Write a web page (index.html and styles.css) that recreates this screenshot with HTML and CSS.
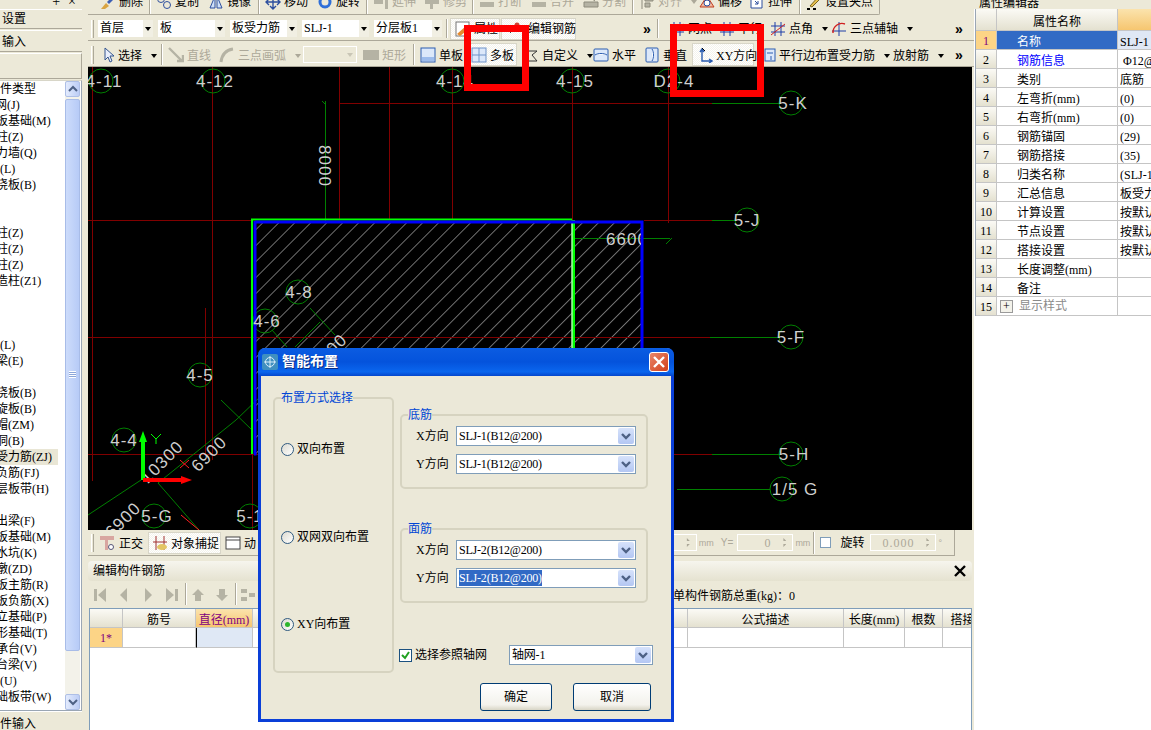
FILE: index.html
```html
<!DOCTYPE html>
<html lang="zh-CN">
<head>
<meta charset="utf-8">
<title>智能布置</title>
<link rel="stylesheet" href="styles.css">
</head>
<body>
<svg class="defs" aria-hidden="true">
  <symbol id="chev" viewBox="0 0 16 16"><path d="M4 6l4 4 4-4" fill="none" stroke="#4d6185" stroke-width="2.4"/></symbol>
  <symbol id="navfirst" viewBox="0 0 16 16"><path d="M2 2h3v12H2zM14 1v14L6 8z" fill="#b5b3a4"/></symbol>
  <symbol id="navprev" viewBox="0 0 16 16"><path d="M11 1v14L4 8z" fill="#b5b3a4"/></symbol>
  <symbol id="navnext" viewBox="0 0 16 16"><path d="M5 1v14l7-7z" fill="#b5b3a4"/></symbol>
  <symbol id="navlast" viewBox="0 0 16 16"><path d="M2 1v14l8-7zM11 2h3v12h-3z" fill="#b5b3a4"/></symbol>
  <symbol id="up" viewBox="0 0 16 16"><path d="M8 2l6 6h-3v6H5V8H2z" fill="#b5b3a4"/></symbol>
  <symbol id="down" viewBox="0 0 16 16"><path d="M5 2h6v6h3l-6 6-6-6h3z" fill="#b5b3a4"/></symbol>
  <symbol id="plate" viewBox="0 0 16 16"><rect x="1" y="1" width="14" height="14" fill="#dce8fa" stroke="#2a5cb0"/><rect x="2" y="10" width="12" height="4" fill="#9dbcec"/></symbol>
  <symbol id="plates" viewBox="0 0 16 16"><rect x="1" y="1" width="14" height="14" fill="#dce8fa" stroke="#6f93c8"/><path d="M8 1v14M1 8h14" stroke="#6f93c8"/></symbol>
  <symbol id="gridico" viewBox="0 0 16 16"><path d="M5 1v14M11 1v14M1 5h14M1 11h14" stroke="#1f3fa8" fill="none"/><path d="M1 14L15 3" stroke="#d02020"/></symbol>
</svg>

<div class="app">
  <aside class="left">
    <div class="left-top"><span>+</span><span>×</span></div>
    <div class="left-btn">设置</div>
    <div class="left-btn tall">输入</div>
    <div class="left-box"></div>
    <div class="tree-wrap">
      <ul class="tree">
        <li class="i12">构件类型</li><li class="i17">轴网(J)</li><li>筏板基础(M)</li><li>框柱(Z)</li><li>剪力墙(Q)</li><li class="i12">梁(L)</li><li>现浇板(B)</li>
        <li></li><li></li><li>框柱(Z)</li><li>暗柱(Z)</li><li>端柱(Z)</li><li>构造柱(Z1)</li><li></li><li></li><li></li>
        <li class="i12">梁(L)</li><li>圈梁(E)</li><li></li><li>现浇板(B)</li><li>螺旋板(B)</li><li>柱帽(ZM)</li><li>板洞(B)</li>
        <li class="sel">板受力筋(ZJ)</li><li>板负筋(FJ)</li><li>楼层板带(H)</li><li></li><li>挑出梁(F)</li><li>筏板基础(M)</li><li>集水坑(K)</li><li>柱墩(ZD)</li><li>筏板主筋(R)</li><li>筏板负筋(X)</li><li>独立基础(P)</li><li>条形基础(T)</li><li>桩承台(V)</li><li>承台梁(V)</li><li class="i12">桩(U)</li><li>基础板带(W)</li>
      </ul>
      <div class="vscroll">
        <div class="sbtn"><svg width="14" height="14"><path d="M3 9l4-4 4 4" fill="none" stroke="#4d6185" stroke-width="2"/></svg></div>
        <div class="thumb"><i></i></div>
        <div class="track"></div>
        <div class="sbtn"><svg width="14" height="14"><path d="M3 5l4 4 4-4" fill="none" stroke="#4d6185" stroke-width="2"/></svg></div>
      </div>
    </div>
    <div class="left-btn foot">件输入</div>
  </aside>

  <main class="center">
    <div class="tb tb1">
      <span class="t w49"><svg class="ic" viewBox="0 0 16 16"><path d="M1 15l5-6 3 3-4 3z" fill="#d9a441"/><path d="M7 8l6-6 2 2-6 6z" fill="#3c5fb4"/></svg>删除</span><b class="sep"></b>
      <span class="t w52"><svg class="ic" viewBox="0 0 16 16"><circle cx="5" cy="5" r="3.5" fill="none" stroke="#2d4f9e"/><circle cx="11" cy="11" r="3.5" fill="none" stroke="#2d4f9e"/></svg>复制</span>
      <span class="t w50"><svg class="ic" viewBox="0 0 16 16"><path d="M7 2L2 14h5zM9 2l5 12H9z" fill="#cfe0f7" stroke="#2d4f9e"/></svg>镜像</span><b class="sep"></b>
      <span class="t w52"><svg class="ic" viewBox="0 0 16 16"><path d="M8 1v14M1 8h14M5 4l3-3 3 3M5 12l3 3 3-3M4 5L1 8l3 3M12 5l3 3-3 3" fill="none" stroke="#2d4f9e" stroke-width="1.4"/></svg>移动</span>
      <span class="t w49"><svg class="ic" viewBox="0 0 16 16"><circle cx="8" cy="8" r="5" fill="none" stroke="#2f6fd8" stroke-width="3"/></svg>旋转</span><b class="sep"></b>
      <span class="t off w51"><svg class="ic" viewBox="0 0 16 16"><path d="M1 6h9v4H1zM12 1h3v14h-3z" fill="#b5b3a4"/></svg>延伸</span>
      <span class="t off w48"><svg class="ic" viewBox="0 0 16 16"><path d="M1 6h14v4H1zM6 1h3v14H6z" fill="#b5b3a4"/></svg>修剪</span><b class="sep"></b>
      <span class="t off w52"><svg class="ic" viewBox="0 0 16 16"><path d="M1 8h14v5H1zM6 1h4v5H6z" fill="#b5b3a4"/></svg>打断</span>
      <span class="t off w52"><svg class="ic" viewBox="0 0 16 16"><path d="M1 8h14v5H1zM6 1h4v5H6z" fill="#b5b3a4"/></svg>合并</span>
      <span class="t off w49"><svg class="ic" viewBox="0 0 16 16"><path d="M1 8h14v5H1zM4 1l8 6" fill="#b5b3a4" stroke="#8d8b7c"/></svg>分割</span><b class="sep"></b>
      <span class="t off w60"><svg class="ic" viewBox="0 0 16 16"><path d="M3 1v14M6 3h8v4H6zM6 9h5v4H6z" fill="#b5b3a4" stroke="#8d8b7c"/></svg>对齐<em class="dd"></em></span>
      <span class="t w50"><svg class="ic" viewBox="0 0 16 16"><path d="M8 2l7 11H1z" fill="#f3b8a0" stroke="#c04020"/><circle cx="8" cy="9" r="3" fill="#fff" stroke="#2d4f9e"/></svg>偏移</span>
      <span class="t w50"><svg class="ic" viewBox="0 0 16 16"><path d="M2 2h11v12H2z" fill="#fff" stroke="#2d4f9e"/><path d="M6 7l3 3M9 7v3H6" fill="none" stroke="#2d4f9e"/></svg>拉伸</span><b class="sep"></b>
      <span class="t"><svg class="ic" viewBox="0 0 16 16"><path d="M4 12L13 2l2 2-9 9z" fill="#e6c04d" stroke="#7a6420"/><path d="M1 15h3M7 15h3" stroke="#000" stroke-width="2"/></svg>设置夹点</span>
    </div>

    <div class="tb tb2">
      <i class="grip"></i>
      <div class="combo w55">首层<em class="dd"></em></div>
      <div class="combo w67">板<em class="dd"></em></div>
      <div class="combo w67">板受力筋<em class="dd"></em></div>
      <div class="combo w67">SLJ-1<em class="dd"></em></div>
      <div class="combo w68">分层板1<em class="dd"></em></div>
      <b class="sep s-a"></b>
      <span class="t pressed w50 attr"><svg class="ic" viewBox="0 0 16 16"><rect x="1" y="1" width="13" height="14" fill="#fff" stroke="#777"/><path d="M2 13l9-8 3 3-9 7z" fill="#e68a2e"/></svg>属性</span>
      <span class="t pressed w75 edit"><svg class="ic wide" viewBox="0 0 22 16"><path d="M2 9h18M5 6L2 9l3 3M17 6l3 3-3 3" fill="none" stroke="#444"/><circle cx="11" cy="4" r="2.5" fill="#d04030"/></svg>编辑钢筋</span>
      <span class="more m1">»</span>
      <b class="sep s-b"></b>
      <span class="t w50"><svg class="ic" viewBox="0 0 16 16"><use href="#gridico"/></svg>网点</span>
      <span class="t w51"><svg class="ic" viewBox="0 0 16 16"><path d="M5 1v14M11 1v14M1 5h14M1 11h14" stroke="#1f3fa8" fill="none"/></svg>平行</span>
      <span class="t w61"><svg class="ic" viewBox="0 0 16 16"><use href="#gridico"/></svg>点角<em class="dd"></em></span>
      <span class="t"><svg class="ic" viewBox="0 0 16 16"><path d="M8 1v14M1 10h14" stroke="#1f3fa8"/><path d="M2 12A9 9 0 0 1 14 3" fill="none" stroke="#d02020" stroke-width="1.4"/></svg>三点辅轴<em class="dd"></em></span>
      <span class="more m2">»</span>
    </div>

    <div class="tb tb3">
      <i class="grip"></i>
      <span class="t w58 sel-tool"><svg class="ic small" viewBox="0 0 12 16"><path d="M2 1v12l3-3 2 5 2-1-2-5h4z" fill="#e8eefb" stroke="#34558f"/></svg>选择<em class="dd"></em></span><b class="sep"></b>
      <span class="t off w51"><svg class="ic" viewBox="0 0 16 16"><path d="M1 1l13 13M9 14h6V8" fill="none" stroke="#b5b3a4" stroke-width="2.4"/></svg>直线</span>
      <span class="t off w84"><svg class="ic" viewBox="0 0 16 16"><path d="M2 15C3 7 7 3 14 2" fill="none" stroke="#b5b3a4" stroke-width="3"/></svg>三点画弧<em class="dd"></em></span>
      <div class="combo off-combo"><em class="dd"></em></div>
      <span class="t off w50"><svg class="ic" viewBox="0 0 16 16"><rect y="3" width="16" height="10" fill="#b5b3a4"/></svg>矩形</span><b class="sep"></b>
      <span class="t w49"><svg class="ic" viewBox="0 0 16 16"><use href="#plate"/></svg>单板</span>
      <span class="t pressed w48 multi"><svg class="ic" viewBox="0 0 16 16"><use href="#plates"/></svg>多板</span>
      <span class="t w70 custom"><svg class="ic" viewBox="0 0 16 16"><path d="M2 12V4h12l-5 4 5 6H2" fill="none" stroke="#333"/></svg>自定义<em class="dd"></em></span>
      <span class="t w51"><svg class="ic" viewBox="0 0 16 16"><rect x="1" y="2" width="14" height="12" rx="1" fill="#dce8fa" stroke="#2a5cb0"/><path d="M2 8c3-2 9-2 12 0" fill="#fff" stroke="#2a5cb0"/></svg>水平</span>
      <span class="t w48"><svg class="ic" viewBox="0 0 16 16"><rect x="2" y="1" width="12" height="14" rx="1" fill="#dce8fa" stroke="#2a5cb0"/><path d="M8 2c2 3 2 9 0 12" fill="#fff" stroke="#2a5cb0"/></svg>垂直</span>
      <span class="t pressed w62 xy"><svg class="ic" viewBox="0 0 16 16"><path d="M5 3v11h10M3 5l2-3 2 3M12 12l3 2-3 2" fill="none" stroke="#2a5cb0" stroke-width="1.4"/><path d="M5 1l3 3" stroke="#000"/></svg>XY方向</span>
      <span class="t w129 para"><svg class="ic small" viewBox="0 0 12 16"><rect x="1" y="2" width="10" height="12" fill="#dce8fa" stroke="#2a5cb0"/><path d="M3 6h6M7 9v4" stroke="#2a5cb0"/></svg>平行边布置受力筋<em class="dd"></em></span>
      <span class="t">放射筋<em class="dd"></em></span>
      <span class="more m2">»</span>
    </div>

    <div class="canvas">
      <svg class="cad" viewBox="88 67 884 463" width="884" height="463">
        <defs>
          <pattern id="hatch" width="11.3" height="11.3" patternUnits="userSpaceOnUse" patternTransform="rotate(45 255 223)">
            <line x1="0" y1="0" x2="0" y2="11.3" stroke="#dedede" stroke-width="1"/>
          </pattern>
          <clipPath id="clip6600"><rect x="590" y="225" width="51" height="30"/></clipPath>
        </defs>
        <rect x="254" y="221" width="388" height="233" fill="url(#hatch)"/>
        <g stroke="#800000" fill="none">
          <path d="M92.500 67V481M212.500 67V460M205.500 308V455M339.500 67V220M389.500 67V220M452.500 67V220M572.500 67V220M668.500 67V223"/>
          <path d="M339 103.500H712M88 220.500H252M644 220.500H712M88 337.500H710M88 454.500H258M674 454.500H712M252.500 454V530"/>
        </g>
        <g stroke="#008000" fill="none">
          <path d="M712 103.500H780M712 220.500H735M710 337.500H780M712 454.500H780M677 489.500H770"/>
          <path d="M325.500 101V221M322 101l4 4M572 238.500H670M666 244l6-6"/>
          <path d="M88 515L141 480M158 483L236 420M236 420L262 395M221 400L252 430M158 483L199 530M142 455L145 480"/>
          <path d="M272 330L287 347M310 308L335 335M320 322L295 347"/>
          <circle cx="101" cy="81" r="12"/><circle cx="213" cy="81" r="12"/><circle cx="452" cy="81" r="12"/><circle cx="572" cy="81" r="12"/><circle cx="668" cy="81" r="12"/>
          <circle cx="791" cy="103" r="12"/><circle cx="747" cy="220" r="12"/><circle cx="791" cy="337" r="12"/><circle cx="791" cy="454" r="12"/><circle cx="782" cy="489" r="12"/>
          <circle cx="298" cy="292" r="12"/><circle cx="265" cy="321" r="12"/><circle cx="200" cy="375" r="12"/><circle cx="124" cy="440" r="12"/><circle cx="154" cy="516" r="12"/><circle cx="250" cy="516" r="12"/>
        </g>
        <path d="M180 460l9 8M189 460l-9 8M181 515L199 530" stroke="#ff2020" fill="none"/>
        <path d="M252 220V454" stroke="#00ff00" stroke-width="2"/>
        <path d="M251 219.500H572M572.500 220V454M574 220V454" stroke="#00ff00" stroke-width="2" fill="none"/>
        <path d="M572 221V454" stroke="#fff" stroke-width="1"/>
        <path d="M255 222H642V348M255 221V454H254" stroke="#0000ff" stroke-width="3" fill="none"/>
        <g class="lbl">
          <text x="104" y="87">4-11</text><text x="215" y="87">4-12</text><text x="455" y="87">4-14</text><text x="575" y="87">4-15</text><text x="674" y="87">D2-4</text>
          <text x="793" y="109">5-K</text><text x="747" y="226">5-J</text><text x="791" y="343">5-F</text><text x="794" y="460">5-H</text><text x="795" y="495">1/5 G</text>
          <text x="299" y="298">4-8</text><text x="267" y="327">4-6</text><text x="200" y="381">4-5</text><text x="124" y="446">4-4</text><text x="157" y="522">5-G</text><text x="250" y="522">5-1</text>
          <g clip-path="url(#clip6600)"><text x="627" y="245">6600</text></g>
          <text transform="translate(319 166) rotate(90)">8000</text>
          <text transform="translate(166 466) rotate(-45)">10300</text>
          <text transform="translate(213 458) rotate(-45)">6900</text>
          <text transform="translate(127 524) rotate(-45)">6900</text>
          <text transform="translate(337 352) rotate(-45)">900</text>
        </g>
        <path d="M143 480V440" stroke="#00ff00" stroke-width="4"/><path d="M143 431l-4 11h8z" fill="#00ff00"/>
        <path d="M151 434l5 5 5-5M156 439v5" stroke="#00ff00" fill="none"/>
        <path d="M143 480H182" stroke="#ff0000" stroke-width="4"/><path d="M192 480l-11-4v8z" fill="#ff0000"/>
      </svg>
    </div>

    <div class="status">
      <i class="grip"></i>
      <span class="st w49"><svg class="ic" viewBox="0 0 16 16"><path d="M1 1h14v4H9v10H6V5H1z" fill="#d8a6a0"/><circle cx="12" cy="12" r="2.500" fill="#fff" stroke="#557"/></svg>正交</span>
      <span class="st pressed w73"><svg class="ic" viewBox="0 0 16 16"><path d="M4 1v14M12 1v14" stroke="#a03030"/><path d="M1 7h14" stroke="#a03030"/><ellipse cx="10" cy="12" rx="5" ry="3" fill="#e3c565"/></svg>对象捕捉</span>
      <span class="st dyn"><svg class="ic" viewBox="0 0 16 16"><rect x="1" y="2" width="14" height="12" fill="#fff" stroke="#444"/><path d="M1 5h14" stroke="#444"/></svg>动</span>
      <span class="coords">
        <span class="spin">0<i class="arrows"></i></span><small>mm</small><small class="y">Y=</small><span class="spin">0<i class="arrows"></i></span><small>mm</small><b class="sep"></b>
        <i class="cb"></i><span class="rot">旋转</span><span class="spin wide">0.000<i class="arrows"></i></span><small>°</small>
      </span>
    </div>

    <div class="phead"><span>编辑构件钢筋</span><svg class="close-x" width="14" height="14" viewBox="0 0 14 14"><path d="M2 2l10 10M12 2L2 12" stroke="#000" stroke-width="2.400"/></svg></div>
    <div class="ptools">
      <svg class="ic" viewBox="0 0 16 16"><use href="#navfirst"/></svg>
      <svg class="ic" viewBox="0 0 16 16"><use href="#navprev"/></svg>
      <svg class="ic" viewBox="0 0 16 16"><use href="#navnext"/></svg>
      <svg class="ic" viewBox="0 0 16 16"><use href="#navlast"/></svg>
      <b class="sep"></b>
      <svg class="ic" viewBox="0 0 16 16"><use href="#up"/></svg>
      <svg class="ic" viewBox="0 0 16 16"><use href="#down"/></svg>
      <b class="sep"></b>
      <svg class="ic" viewBox="0 0 16 16"><path d="M1 2h6v4H1zM1 10h6v4H1zM9 6h6v4H9z" fill="#b5b3a4"/></svg>
      <span class="total">单构件钢筋总重(kg)：0</span>
    </div>
    <div class="rebar">
      <div class="rg">
        <span class="h"></span><span class="h">筋号</span><span class="h act">直径(mm)</span><span class="h"></span><span class="h"></span><span class="h"></span><span class="h"></span><span class="h">公式描述</span><span class="h">长度(mm)</span><span class="h">根数</span><span class="h">搭接</span>
        <span class="n">1*</span><span class="c"></span><span class="c cur"></span><span class="c"></span><span class="c"></span><span class="c"></span><span class="c"></span><span class="c"></span><span class="c"></span><span class="c"></span><span class="c"></span>
      </div>
    </div>
  </main>

  <aside class="right">
    <div class="rtitle">属性编辑器</div>
    <div class="props">
      <span class="ph"></span><span class="ph">属性名称</span><span class="ph orange"></span>
      <span class="pn act">1</span><span class="pk sel">名称</span><span class="pv cur">SLJ-1</span>
      <span class="pn">2</span><span class="pk blue">钢筋信息</span><span class="pv">&nbsp;Φ12@200</span>
      <span class="pn">3</span><span class="pk">类别</span><span class="pv">底筋</span>
      <span class="pn">4</span><span class="pk">左弯折(mm)</span><span class="pv">(0)</span>
      <span class="pn">5</span><span class="pk">右弯折(mm)</span><span class="pv">(0)</span>
      <span class="pn">6</span><span class="pk">钢筋锚固</span><span class="pv">(29)</span>
      <span class="pn">7</span><span class="pk">钢筋搭接</span><span class="pv">(35)</span>
      <span class="pn">8</span><span class="pk">归类名称</span><span class="pv">(SLJ-1)</span>
      <span class="pn">9</span><span class="pk">汇总信息</span><span class="pv">板受力筋</span>
      <span class="pn">10</span><span class="pk">计算设置</span><span class="pv">按默认</span>
      <span class="pn">11</span><span class="pk">节点设置</span><span class="pv">按默认</span>
      <span class="pn">12</span><span class="pk">搭接设置</span><span class="pv">按默认</span>
      <span class="pn">13</span><span class="pk">长度调整(mm)</span><span class="pv"></span>
      <span class="pn">14</span><span class="pk">备注</span><span class="pv"></span>
      <span class="pn">15</span><span class="pk gray"><i class="plus">+</i>显示样式</span><span class="pv"></span>
    </div>
  </aside>
</div>

<div class="mark mark-a"></div>
<div class="mark mark-b"></div>

<section class="dialog">
  <header class="dtitle">
    <svg width="16" height="16" viewBox="0 0 16 16"><rect width="16" height="16" rx="2" fill="#3f8fc0"/><circle cx="8" cy="8" r="4.500" fill="none" stroke="#d8ecf8"/><path d="M8 2v12M2 8h12" stroke="#d8ecf8"/></svg>
    <span>智能布置</span>
    <button class="dclose" type="button"><svg width="12" height="12" viewBox="0 0 12 12"><path d="M1 1l10 10M11 1L1 11" stroke="#fff" stroke-width="2.400"/></svg></button>
  </header>
  <div class="dbody">
    <div class="dmain">
      <fieldset class="grp mode">
        <legend>布置方式选择</legend>
        <label class="radio r1"><i class="rd"></i>双向布置</label>
        <label class="radio r2"><i class="rd"></i>双网双向布置</label>
        <label class="radio r3"><i class="rd on"></i>XY向布置</label>
      </fieldset>
      <div class="dright">
        <fieldset class="grp bars">
          <legend>底筋</legend>
          <div class="row"><span class="lab">X方向</span><div class="sel-x"><span>SLJ-1(B12@200)</span><i class="drop"><svg width="16" height="16"><use href="#chev"/></svg></i></div></div>
          <div class="row"><span class="lab">Y方向</span><div class="sel-x"><span>SLJ-1(B12@200)</span><i class="drop"><svg width="16" height="16"><use href="#chev"/></svg></i></div></div>
        </fieldset>
        <fieldset class="grp bars top2">
          <legend>面筋</legend>
          <div class="row"><span class="lab">X方向</span><div class="sel-x"><span>SLJ-2(B12@200)</span><i class="drop"><svg width="16" height="16"><use href="#chev"/></svg></i></div></div>
          <div class="row"><span class="lab">Y方向</span><div class="sel-x"><span class="hl">SLJ-2(B12@200)</span><i class="drop"><svg width="16" height="16"><use href="#chev"/></svg></i></div></div>
        </fieldset>
        <div class="axis">
          <i class="chk"><svg width="11" height="11" viewBox="0 0 11 11"><path d="M2 5l3 3 4-6" fill="none" stroke="#21a121" stroke-width="2"/></svg></i>
          <span class="axis-lab">选择参照轴网</span>
          <div class="sel-x axis-sel"><span>轴网-1</span><i class="drop"><svg width="16" height="16"><use href="#chev"/></svg></i></div>
        </div>
      </div>
    </div>
    <div class="dfoot"><button type="button" class="xpbtn ok">确定</button><button type="button" class="xpbtn cancel">取消</button></div>
  </div>
</section>
</body>
</html>
```
FILE: styles.css
```css
* { box-sizing: border-box; }
html, body { margin: 0; height: 730px; width: 1151px; overflow: hidden; }
body { position: relative; background: #ece9d8; color: #000; font: 12px/16px "Liberation Serif", "Noto Sans CJK SC", serif; }
.defs { display: none; }
.app { display: grid; grid-template-columns: 82px 892px 177px; height: 730px; }

/* left */
.left { display: flex; flex-direction: column; height: 730px; overflow: hidden; }
.left-top { height: 9px; display: flex; justify-content: flex-end; gap: 8px; padding-right: 6px; line-height: 4px; font-size: 14px; overflow: hidden; }
.left-btn { height: 20px; line-height: 19px; padding-left: 2px; border-bottom: 1px solid #aca899; border-top: 1px solid #fff; font-size: 12px; }
.left-btn.tall { height: 22px; line-height: 22px; margin-top: 1px; }
.left-box { height: 26px; margin: 1px 0 1px; border: 1px solid #fff; border-left: 0; border-right-color: #aca899; border-bottom-color: #aca899; }
.tree-wrap { height: 633px; display: flex; background: #fff; border: 1px solid #9aa6b4; border-left: 0; border-top-color: #d8d6c8; padding-right: 1px; }
.tree { list-style: none; margin: 0; padding: 0; flex: 1; overflow: hidden; background: #fff; }
.tree li { height: 16px; line-height: 16px; margin-left: -16px; white-space: nowrap; width: 74px; }
.tree li.i12 { margin-left: -12px; width: 70px; }
.tree li.i17 { margin-left: -17px; }
.tree li.sel { background: #e9e6d5; }
.vscroll { width: 15px; display: flex; flex-direction: column; background: #f3f2ea; }
.sbtn { height: 16px; background: linear-gradient(90deg, #e3ebfd, #bccdf5); border: 1px solid #aebfe6; border-radius: 2px; display: flex; align-items: center; justify-content: center; flex: none; }
.thumb { height: 552px; margin-top: 2px; background: linear-gradient(90deg, #cddcfb, #b7cbf7); border: 1px solid #a8bce8; border-radius: 2px; display: flex; align-items: center; justify-content: center; }
.thumb i { display: block; width: 7px; height: 7px; background: repeating-linear-gradient(#fff 0 1px, #8da6d8 1px 2px); }
.track { flex: 1; }
.left-btn.foot { height: 19px; border-bottom: 0; margin-top: 0; padding: 3px 0 0; }

/* toolbars */
.center { display: flex; flex-direction: column; padding-left: 6px; height: 730px; min-width: 0; }
.tb { display: flex; white-space: nowrap; overflow: hidden; flex: none; }
.t { display: inline-flex; align-items: center; gap: 3px; flex: none; }
.ic { width: 16px; height: 16px; flex: none; }
.ic.small { width: 12px; }
.ic.wide { width: 22px; }
.off { color: #aca899; }
.sep { width: 2px; align-self: stretch; border-left: 1px solid #aca899; border-right: 1px solid #fff; flex: none; margin-right: 5px; }
.grip { width: 3px; height: 18px; border-left: 1px solid #fff; border-right: 1px solid #aca899; flex: none; align-self: center; }
.dd { width: 0; height: 0; margin-left: 3px; border: 3px solid transparent; border-top: 4px solid #000; border-bottom: 0; flex: none; }
.off .dd { border-top-color: #aca899; }
.more { font: bold 14px/16px "Liberation Sans", sans-serif; width: 14px; flex: none; }
.pressed { background: repeating-conic-gradient(#f4f3ec 0 25%, #fff 0 50%) 0 0 / 2px 2px; box-shadow: inset 0 0 0 1px #d8d6c8; }
.w48 { width: 48px; } .w49 { width: 49px; } .w50 { width: 50px; } .w51 { width: 51px; } .w52 { width: 52px; } .w58 { width: 58px; }
.w60 { width: 60px; } .w61 { width: 61px; } .w62 { width: 62px; } .w70 { width: 70px; } .w73 { width: 73px; } .w75 { width: 75px; } .w84 { width: 84px; } .w129 { width: 129px; }

.tb1 { height: 15px; width: 792px; align-items: flex-end; padding-left: 12px; border-right: 1px solid #aca899; border-bottom: 1px solid #aca899; border-radius: 0 0 2px 0; }
.tb1 .t { height: 22px; padding-bottom: 2px; }
.tb1 .sep { margin-top: -6px; }
.tb1 .dd { margin-left: 6px; }

.tb2 { height: 24px; margin-top: 2px; align-items: center; padding-left: 3px; border-bottom: 1px solid #aca899; }
.combo { height: 17px; background: linear-gradient(90deg, #fff calc(100% - 10px), #f1efe3 0); padding-left: 2px; line-height: 17px; display: flex; flex: none; margin-right: 5px; }
.tb2 .combo .dd { margin: 7px 2px 0 auto; }
.tb2 .combo:first-of-type { margin-left: 4px; }
.w55 { width: 55px; } .w67 { width: 67px; } .w68 { width: 68px; margin-right: 4px; }
.tb2 .sep { height: 19px; align-self: center; }
.tb2 .s-a { margin-right: 2px; }
.tb2 .s-b { margin-right: 10px; }
.tb2 .pressed { height: 22px; padding-left: 5px; }
.tb2 .attr { margin-right: 1px; }
.tb2 .edit { gap: 0; }
.tb2 .t .dd { margin-left: 6px; }
.more.m1 { margin: 0 0 0 67px; }
.more.m2 { margin: 0 5px 0 auto; }

.tb3 { height: 26px; padding-top: 2px; align-items: center; padding-left: 3px; border-bottom: 1px solid #aca899; }
.tb3 .grip { margin-right: 9px; }
.tb3 .sep { height: 21px; align-self: center; }
.tb3 .t { padding-top: 2px; height: 23px; }
.tb3 .ic { margin-top: -2px; }
.tb3 .t .dd { margin-left: 6px; }
.tb3 .multi { padding-left: 2px; }
.tb3 .custom { margin-left: 6px; }
.tb3 .xy { padding-left: 5px; }
.tb3 .para { margin-left: 10px; }
.off-combo { width: 54px; background: #ece9d8; border: 1px solid #fff; margin-right: 6px; }
.off-combo .dd { margin: 6px 3px 0 auto; border-top-color: #c9c6b6; }

/* canvas */
.canvas { width: 884px; height: 463px; background: #000; flex: none; }
.cad { display: block; }
.lbl text { font: 17px "Liberation Sans", sans-serif; letter-spacing: 1px; fill: #cfcfcf; text-anchor: middle; }

/* status */
.status { height: 26px; width: 867px; display: flex; align-items: center; padding-left: 3px; border-bottom: 1px solid #aca899; border-right: 1px solid #aca899; flex: none; }
.status .grip { margin-right: 5px; }
.st { display: inline-flex; align-items: center; gap: 4px; height: 22px; padding-top: 2px; flex: none; }
.st .ic { margin-top: -2px; }
.st.pressed { padding-left: 4px; gap: 3px; }
.st.dyn { margin-left: 4px; gap: 3px; }
.coords { margin-left: auto; display: flex; align-items: center; padding-right: 12px; }
.coords small { font: 9px "Liberation Sans", sans-serif; color: #aca899; margin-left: 2px; }
.coords small.y { margin: 0 4px 0 7px; font-size: 10px; }
.coords .sep { height: 22px; margin: 0 5px 0 3px; }
.spin { width: 56px; height: 17px; border: 1px solid #fff; text-align: right; padding-right: 21px; color: #aca899; letter-spacing: 1px; position: relative; }
.spin.wide { width: 66px; }
.arrows { position: absolute; right: 6px; top: 3px; width: 6px; height: 9px; background: linear-gradient(#aca899 0 3px, transparent 3px 6px, #aca899 6px); clip-path: polygon(50% 0, 100% 33%, 0 33%, 0 67%, 100% 67%, 50% 100%); }
.cb { width: 11px; height: 11px; background: #fff; border: 1px solid #7f9db9; }
.rot { margin: 0 6px 0 9px; }

/* edit panel */
.phead { height: 20px; margin: 5px 2px 0 0; display: flex; align-items: center; justify-content: space-between; padding: 0 5px 0 5px; background: linear-gradient(#f6f5ee, #e5e2d0); border-radius: 4px; flex: none; }
.ptools { height: 27px; padding: 2px 0 0 4px; display: flex; align-items: center; gap: 8px; flex: none; }
.ptools .ic { margin-top: -2px; }
.ptools .sep { height: 22px; margin: 0 -5px 0 -3px; }
.total { margin-left: 409px; }
.rebar { flex: 1; margin: 0 2px 0 1px; background: #fff; border: 1px solid #7f9db9; border-bottom: 0; overflow: hidden; }
.rg { display: grid; grid-template-columns: 33px 73px 57px 50px 50px 150px 185px 156px 61px 38px 40px; grid-template-rows: 19px 20px; }
.h { background: linear-gradient(#fbfaf5, #e4e1d0); border-right: 1px solid #c5c5c5; border-bottom: 1px solid #c5c5c5; text-align: center; line-height: 23px; white-space: nowrap; overflow: hidden; }
.h.act { background: linear-gradient(#fbe3ad, #f6c670); color: #800080; }
.n { background: #fcd486; color: #800080; text-align: center; line-height: 20px; border-right: 1px solid #c5c5c5; border-bottom: 1px solid #c5c5c5; }
.c { border-right: 1px solid #c5c5c5; border-bottom: 1px solid #c5c5c5; }
.c.cur { background: #dfe8f5; border-left: 1px solid #000; }

/* right */
.right { background: #fff; height: 730px; overflow: hidden; padding-left: 1px; }
.rtitle { height: 9px; line-height: 6px; background: #ece9d8; margin-left: -1px; padding-left: 5px; overflow: hidden; }
.props { display: grid; width: 240px; grid-template-columns: 21px 121px 98px; grid-template-rows: 22px repeat(15, 19px); border-left: 1px solid #9aa6b4; }
.ph { background: linear-gradient(#fbfaf5, #e4e1d0); border-right: 1px solid #c5c5c5; border-bottom: 1px solid #c5c5c5; text-align: center; line-height: 26px; font-size: 12px; overflow: hidden; }
.ph.orange { background: linear-gradient(#fbe3ad, #f6c670); }
.pn { background: linear-gradient(#fbfaf5, #e4e1d0); border-right: 1px solid #c5c5c5; border-bottom: 1px solid #c5c5c5; text-align: center; line-height: 20px; overflow: hidden; }
.pn.act { background: #fcd486; color: #800080; }
.pk { padding-left: 20px; line-height: 23px; height: 19px; border-right: 1px solid #c5c5c5; border-bottom: 1px solid #c5c5c5; white-space: nowrap; display: flex; overflow: hidden; }
.pk.sel { background: #316ac5; color: #fff; }
.pk.blue { color: #0000ff; }
.pk.gray { color: #8a8a8a; padding-left: 3px; gap: 6px; align-items: center; line-height: 19px; }
.plus { width: 13px; height: 13px; border: 1px solid #9a9a9a; background: #f3f2ea; color: #000; font-style: normal; line-height: 11px; text-align: center; flex: none; }
.pv { padding-left: 2px; line-height: 23px; height: 19px; border-bottom: 1px solid #c5c5c5; white-space: nowrap; overflow: hidden; }
.pv.cur { background: #dfe8f5; }

/* annotation frames */
.mark { position: absolute; border: 7px solid #ff0000; z-index: 3; }
.mark-a { left: 464px; top: 25px; width: 65px; height: 66px; }
.mark-b { left: 670px; top: 24px; width: 94px; height: 73px; }

/* dialog */
.dialog { position: absolute; left: 258px; top: 348px; width: 416px; height: 374px; z-index: 4; background: #ebe8d8; border: 3px solid #0a3fd8; border-top: 0; border-radius: 7px 7px 0 0; display: flex; flex-direction: column; }
.dtitle { height: 28px; margin: 0 -3px; padding: 0 5px 0 4px; display: flex; align-items: center; gap: 4px; flex: none; background: linear-gradient(#0a5ee6 0, #0a5ae0 10%, #0453dc 50%, #0a66ee 85%, #0546cc); border-radius: 7px 7px 0 0; color: #fff; font-size: 14px; font-weight: 700; text-shadow: 1px 1px 0 #0a2a80; }
.dclose { margin-left: auto; width: 20px; height: 20px; padding: 0; border: 1px solid #fff; border-radius: 3px; background: linear-gradient(135deg, #e9866a, #d2401a); display: flex; align-items: center; justify-content: center; }
.dbody { flex: 1; display: flex; flex-direction: column; padding: 14px 0 0 12px; }
.dmain { display: flex; gap: 6px; }
.grp { margin: 0; padding: 0; border: 2px solid #d6d3c0; border-radius: 5px; min-width: 0; }
.grp legend { color: #0046d5; padding: 0; line-height: 16px; font-size: 12px; }
.mode { width: 121px; height: 283px; display: flex; flex-direction: column; padding-left: 6px; }
.radio { display: flex; align-items: center; gap: 3px; height: 16px; }
.r1 { margin-top: 35px; }
.r2 { margin-top: 72px; }
.r3 { margin-top: 71px; }
.rd { width: 13px; height: 13px; border-radius: 50%; border: 1px solid #2f5a80; background: linear-gradient(135deg, #dcdad0, #fff); flex: none; position: relative; }
.rd.on::after { content: ""; position: absolute; left: 3px; top: 3px; width: 5px; height: 5px; border-radius: 50%; background: #2cb52c; }
.dright { width: 252px; padding-top: 17px; flex: none; }
.bars { width: 248px; height: 82px; padding: 3px 0 0 14px; display: flex; flex-direction: column; gap: 8px; }
.bars legend { margin-left: -8px; }
.top2 { margin-top: 32px; }
.row { display: flex; align-items: center; }
.lab { width: 40px; flex: none; }
.sel-x { width: 180px; height: 20px; background: #fff; border: 1px solid #7f9db9; display: flex; align-items: center; padding-left: 2px; flex: none; }
.sel-x > span:first-child { letter-spacing: -0.2px; }
.hl { background: #316ac5; color: #fff; }
.drop { margin-left: auto; width: 16px; height: 16px; margin-right: 1px; background: linear-gradient(#d6e2fb, #b4c7f3); border-radius: 2px; flex: none; display: block; }
.drop svg { display: block; }
.axis { display: flex; align-items: center; margin-top: 42px; margin-left: -1px; white-space: nowrap; }
.chk { width: 13px; height: 13px; border: 1px solid #1c5180; background: #fff; display: flex; align-items: center; justify-content: center; margin-right: 3px; flex: none; }
.axis-lab { flex: none; }
.axis-sel { width: 144px; margin-left: 22px; }
.dfoot { display: flex; gap: 21px; padding: 0 0 0 207px; margin-top: 10px; }
.xpbtn { height: 28px; padding: 0; border: 1px solid #003c74; border-radius: 3px; background: linear-gradient(#fff, #f3f2ec 80%, #d8d5c6); font: inherit; }
.ok { width: 72px; }
.cancel { width: 78px; }
```
